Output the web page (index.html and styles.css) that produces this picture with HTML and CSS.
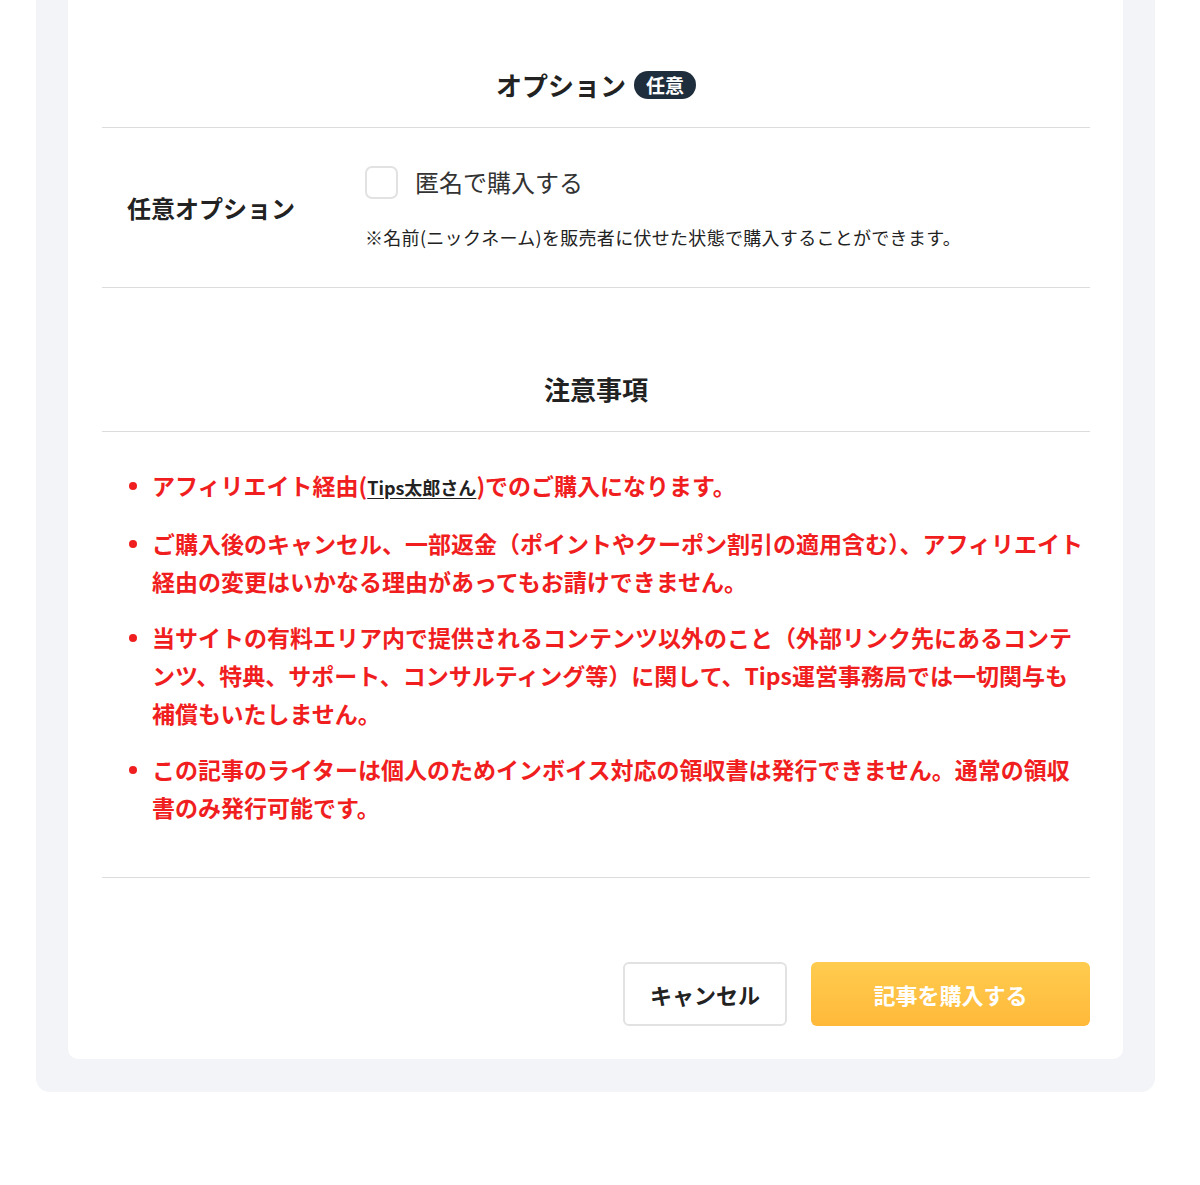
FILE: index.html
```html
<!DOCTYPE html>
<html lang="ja">
<head>
  <meta charset="UTF-8" />
  <meta name="viewport" content="width=device-width, initial-scale=1.0"/>
  <title>記事を購入する</title>
  <link rel="stylesheet" href="styles.css">
</head>
<body>
  <div class="panel">
    <div class="card">

      <!-- Options -->
      <h2 class="section-title">オプション <span class="badge">任意</span></h2>
      <div class="option-row">
        <div class="option-label">任意オプション</div>
        <div class="option-body">
          <label class="check">
            <input type="checkbox" class="check-box">
            <span>匿名で購入する</span>
          </label>
          <p class="note">※名前(ニックネーム)を販売者に伏せた状態で購入することができます。</p>
        </div>
      </div>

      <!-- Notes -->
      <h2 class="section-title notes-title">注意事項</h2>
      <ul class="notes">
        <li>アフィリエイト経由(<a href="#" class="affiliate">Tips太郎さん</a>)でのご購入になります。</li>
        <li>ご購入後のキャンセル、一部返金（ポイントやクーポン割引の適用含む）、アフィリエイト経由の変更はいかなる理由があってもお請けできません。</li>
        <li>当サイトの有料エリア内で提供されるコンテンツ以外のこと（外部リンク先にあるコンテンツ、特典、サポート、コンサルティング等）に関して、Tips運営事務局では一切関与も補償もいたしません。</li>
        <li>この記事のライターは個人のためインボイス対応の領収書は発行できません。通常の領収書のみ発行可能です。</li>
      </ul>

      <div class="actions">
        <button class="cancel-btn">キャンセル</button>
        <button class="buy-btn">記事を購入する</button>
      </div>

    </div>
  </div>
</body>
</html>
```

FILE: styles.css
```css
* {
  margin: 0;
  padding: 0;
  box-sizing: border-box;
}

body {
  font-family: "Noto Sans CJK JP", "Noto Sans", sans-serif;
  background-color: #fff;
  color: #222;
}

.panel {
  width: 1119px;
  margin-left: 36px;
  padding: 0 32px 33px;
  background-color: #f3f4f8;
  border-radius: 0 0 14px 14px;
}

.card {
  background-color: #fff;
  border-radius: 0 0 10px 10px;
  padding: 67px 33px 33px 34px;
}

.section-title {
  font-size: 26px;
  font-weight: 700;
  line-height: 36px;
  text-align: center;
  padding-bottom: 24px;
  border-bottom: 1px solid #dcdcdc;
  color: #222;
}

.badge {
  display: inline-block;
  vertical-align: 3px;
  background-color: #1f2e3d;
  color: #fff;
  font-size: 19px;
  line-height: 28px;
  padding: 0 12px;
  border-radius: 14px;
  margin-left: 2px;
}

.option-row {
  display: flex;
  align-items: center;
  padding: 37px 0 38px;
  border-bottom: 1px solid #dcdcdc;
}

.option-label {
  width: 263px;
  padding-left: 25px;
  font-size: 24px;
  font-weight: 700;
}

.check {
  display: flex;
  align-items: center;
  gap: 17px;
  font-size: 24px;
  line-height: 34px;
  color: #333;
}

.check-box {
  appearance: none;
  width: 33px;
  height: 33px;
  border: 2px solid #e2e2e2;
  border-radius: 7px;
  background-color: #fff;
}

.note {
  margin-top: 26px;
  font-size: 18px;
  letter-spacing: 0.3px;
  line-height: 24px;
  color: #222;
}

.notes-title {
  margin-top: 83px;
}

.notes {
  list-style: none;
  padding: 34px 0 51px 50px;
  border-bottom: 1px solid #dcdcdc;
}

.notes li {
  position: relative;
  font-size: 23px;
  font-weight: 700;
  line-height: 38px;
  color: #f01e1e;
}

.notes li + li {
  margin-top: 18px;
}

.notes li::before {
  content: "";
  position: absolute;
  left: -23px;
  top: 16px;
  width: 8px;
  height: 8px;
  border-radius: 50%;
  background-color: #f01e1e;
}

.affiliate {
  color: #222;
  font-size: 18px;
  text-decoration: underline;
  text-underline-offset: 3px;
}

.actions {
  display: flex;
  justify-content: flex-end;
  gap: 24px;
  padding-top: 84px;
}

.actions button {
  height: 64px;
  border-radius: 6px;
  font-family: inherit;
  font-size: 22px;
  font-weight: 700;
  cursor: pointer;
}

.cancel-btn {
  width: 164px;
  background-color: #fff;
  border: 2px solid #e2e2e2;
  color: #222;
}

.buy-btn {
  width: 279px;
  border: none;
  color: #fff;
  background: linear-gradient(#ffcc4f, #ffb93a);
}

button:focus {
  outline: none;
}
```
